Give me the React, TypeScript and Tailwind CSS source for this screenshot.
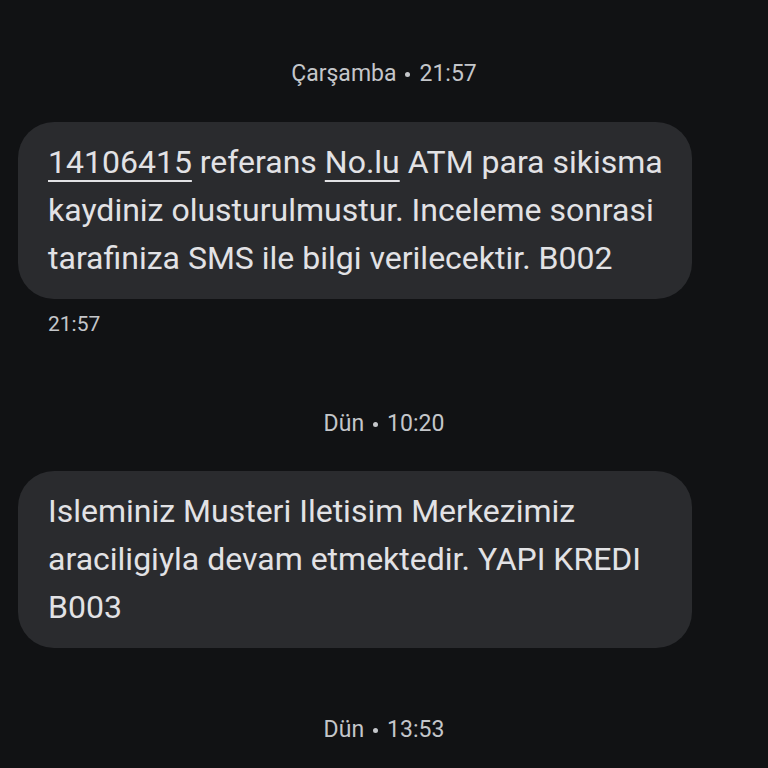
import React from 'react';

function DateHeader({ day, time, className = '' }: { day: string; time: string; className?: string }) {
  return (
    <div
      className={`flex items-center justify-center text-[23px] leading-[28px] text-[#c4c6ca] ${className}`}
    >
      <span>{day}</span>
      <span className="mx-[9px] inline-block h-[5px] w-[5px] rounded-full bg-[#c4c6ca]" />
      <span>{time}</span>
    </div>
  );
}

function Bubble({ children, className = '' }: { children: React.ReactNode; className?: string }) {
  return (
    <div
      className={`ml-[18px] w-[674px] rounded-[36px] bg-[#2a2b2e] pl-[30px] pr-4 pt-[16px] pb-[17px] text-[32px] leading-[48px] text-[#e2e2e5] ${className}`}
    >
      {children}
    </div>
  );
}

export default function App() {
  return (
    <div
      className="h-[768px] w-[768px] overflow-hidden bg-[#111214] pt-[60px]"
      style={{ fontFamily: 'Roboto, "Noto Sans", sans-serif' }}
    >
      <DateHeader day="Çarşamba" time="21:57" />

      <Bubble className="mt-[34px]">
        <span className="underline decoration-2 underline-offset-[7px]">14106415</span> referans{' '}
        <span className="underline decoration-2 underline-offset-[7px]">No.lu</span> ATM para sikisma
        <br />
        kaydiniz olusturulmustur. Inceleme sonrasi
        <br />
        tarafiniza SMS ile bilgi verilecektir. B002
      </Bubble>

      <div className="ml-[48px] mt-[11px] text-[21px] leading-[28px] text-[#c4c6ca]">21:57</div>

      <DateHeader day="Dün" time="10:20" className="mt-[72px]" />

      <Bubble className="mt-[33px]">
        Isleminiz Musteri Iletisim Merkezimiz
        <br />
        araciligiyla devam etmektedir. YAPI KREDI
        <br />
        B003
      </Bubble>

      <DateHeader day="Dün" time="13:53" className="mt-[68px]" />
    </div>
  );
}
